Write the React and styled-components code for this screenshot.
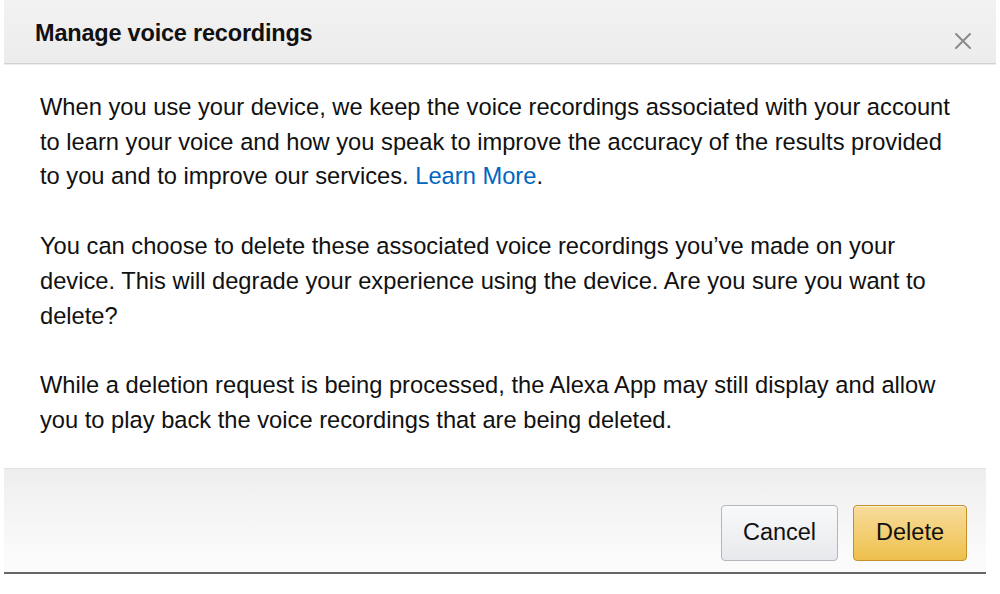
import React from "react";
import styled, { createGlobalStyle } from "styled-components";

const Global = createGlobalStyle`
  html, body { margin: 0; padding: 0; background: #ffffff; }
  body { font-family: "Liberation Sans", Arial, sans-serif; color: #111; }
`;

const Page = styled.div`
  width: 1000px;
  height: 594px;
  overflow: hidden;
  background: #fff;
  padding: 0 4px 0 4px;
  box-sizing: border-box;
`;

const Dialog = styled.div`
  display: flex;
  flex-direction: column;
  background: #fff;
`;

const Header = styled.div`
  display: flex;
  align-items: center;
  justify-content: space-between;
  height: 64px;
  padding: 0 22px 0 30px;
  box-sizing: border-box;
  background: linear-gradient(#f2f2f2, #ececec);
  border-bottom: 1px solid #d2d2d2;
  box-shadow: 0 1px 0 #ececec;
`;

const Title = styled.h1`
  margin: 3px 0 0 1px;
  font-size: 23.5px;
  font-weight: bold;
  color: #111;
  letter-spacing: -0.2px;
`;

const Close = styled.button`
  border: none;
  background: none;
  padding: 0;
  margin-top: 18px;
  width: 22px;
  height: 22px;
  display: flex;
  align-items: center;
  justify-content: center;
  cursor: pointer;
`;

const Body = styled.div`
  display: flex;
  flex-direction: column;
  gap: 35px;
  padding: 26px 20px 30px 36px;
`;

const Para = styled.p`
  margin: 0;
  font-size: 23.7px;
  line-height: 34.7px;
  color: #111;
  white-space: nowrap;
`;

const Link = styled.a`
  color: #0066c0;
  text-decoration: none;
`;

const Footer = styled.div`
  display: flex;
  justify-content: flex-end;
  align-items: flex-start;
  gap: 15px;
  height: 106px;
  padding: 36px 19px 0 0;
  box-sizing: border-box;
  background: linear-gradient(#eeeeee, #fbfbfb 85%);
  border-top: 1px solid #e2e2e2;
  border-bottom: 2px solid #666;
  margin-right: 10px;
`;

const Button = styled.button`
  height: 56px;
  padding: 0 ${(p) => (p.$primary ? "22px" : "21px")};
  font-family: "Liberation Sans", Arial, sans-serif;
  font-size: 23.5px;
  color: #111;
  border-radius: 4px;
  border: 1px solid ${(p) => (p.$primary ? "#c39128" : "#b3b6bc")};
  background: ${(p) =>
    p.$primary
      ? "linear-gradient(#f7dc9c, #efc04c)"
      : "linear-gradient(#f8f9fa, #e8e9ec)"};
  box-shadow: 0 1px 0 rgba(255, 255, 255, 0.6) inset;
  cursor: pointer;
`;

export default function App() {
  return (
    <Page>
      <Global />
      <Dialog>
        <Header>
          <Title>Manage voice recordings</Title>
          <Close aria-label="Close">
            <svg width="18" height="18" viewBox="0 0 18 18">
              <path d="M2 2 L16 16 M16 2 L2 16" stroke="#8a8a8a" strokeWidth="2" strokeLinecap="round" />
            </svg>
          </Close>
        </Header>
        <Body>
          <Para>
            When you use your device, we keep the voice recordings associated with your account
            <br />
            to learn your voice and how you speak to improve the accuracy of the results provided
            <br />
            to you and to improve our services. <Link href="#">Learn More</Link>.
          </Para>
          <Para>
            You can choose to delete these associated voice recordings you’ve made on your
            <br />
            device. This will degrade your experience using the device. Are you sure you want to
            <br />
            delete?
          </Para>
          <Para>
            While a deletion request is being processed, the Alexa App may still display and allow
            <br />
            you to play back the voice recordings that are being deleted.
          </Para>
        </Body>
        <Footer>
          <Button>Cancel</Button>
          <Button $primary>Delete</Button>
        </Footer>
      </Dialog>
    </Page>
  );
}
